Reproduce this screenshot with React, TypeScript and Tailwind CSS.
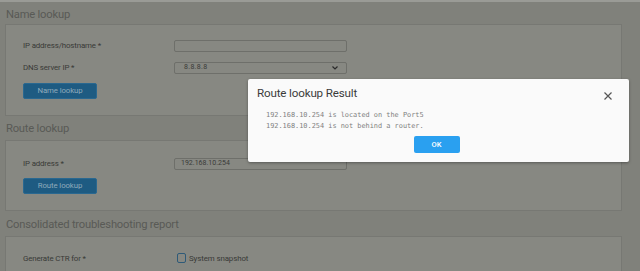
import React from "react";

function Label({ children }: { children: React.ReactNode }) {
  return <div className="w-[151px] text-[7.9px] tracking-[-0.15px] text-[#393a37]">{children}</div>;
}

export default function App() {
  return (
    <div
      className="relative w-[640px] h-[271px] overflow-hidden bg-[#80817b] border-t-2 border-[#9a9b96]"
      style={{ fontFamily: "Roboto, 'Liberation Sans', sans-serif" }}
    >
      <div className="pl-[5px] pr-[18px]">
        <div className="text-[11.2px] tracking-[-0.2px] text-[#595a56] pl-[1px] pt-[5px] h-[22px] leading-[16px]">Name lookup</div>
        <div className="border border-[#777873] bg-[#878882] h-[92px] pl-[17px] pt-[14px]">
          <div className="flex items-center h-[13px]">
            <Label>IP address/hostname *</Label>
            <div className="w-[173px] h-[12px] border border-[#6e6f6a] rounded-[2px] bg-[#878882]" />
          </div>
          <div className="flex items-center h-[13px] mt-[9px]">
            <Label>DNS server IP *</Label>
            <div className="w-[173px] h-[12px] border border-[#6e6f6a] rounded-[2px] bg-[#878882] flex items-center justify-between pl-[9px] pr-[8px]">
              <span className="text-[7px] text-[#3a3b38] tracking-[0.3px]">8.8.8.8</span>
              <svg width="6" height="4" viewBox="0 0 6 4"><path d="M0.5 0.5 L3 3 L5.5 0.5" stroke="#2a2a2a" strokeWidth="1.2" fill="none" /></svg>
            </div>
          </div>
          <button className="mt-[9px] w-[74px] h-[16px] rounded-[2px] bg-[#1e5b82] border border-[#2a6890] text-[7.8px] tracking-[-0.1px] text-[#8eaabb] flex items-center justify-center">
            Name lookup
          </button>
        </div>
        <div className="text-[11.2px] tracking-[-0.2px] text-[#595a56] pl-[1px] pt-[5px] h-[24px] leading-[16px]">Route lookup</div>
        <div className="border border-[#777873] bg-[#878882] h-[71px] pl-[17px] pt-[16px]">
          <div className="flex items-center h-[13px]">
            <Label>IP address *</Label>
            <div className="w-[173px] h-[12px] border border-[#6e6f6a] rounded-[2px] bg-[#878882] flex items-center px-[6px]">
              <span className="text-[7px] text-[#3a3b38]">192.168.10.254</span>
            </div>
          </div>
          <button className="mt-[8px] w-[74px] h-[16px] rounded-[2px] bg-[#1e5b82] border border-[#2a6890] text-[7.8px] tracking-[-0.1px] text-[#8eaabb] flex items-center justify-center">
            Route lookup
          </button>
        </div>
        <div className="text-[11.2px] tracking-[-0.2px] text-[#595a56] pl-[1px] pt-[6px] h-[25px] leading-[16px]">Consolidated troubleshooting report</div>
        <div className="border border-[#777873] bg-[#878882] h-[40px] pl-[17px] pt-[15px]">
          <div className="flex items-center h-[13px]">
            <Label>Generate CTR for *</Label>
            <div className="flex items-center ml-[3px]">
              <div className="w-[9px] h-[10px] border border-[#2e5a78] rounded-[2px]" />
              <span className="ml-[3px] text-[7.9px] tracking-[-0.1px] text-[#393a37]">System snapshot</span>
            </div>
          </div>
        </div>
      </div>

      <div className="absolute left-[248px] top-[77px] w-[381px] h-[83px] bg-[#fafafa] rounded-[2px] shadow-[0_1px_3px_rgba(0,0,0,0.35)]">
        <div className="flex items-center justify-between pl-[9px] pr-[17px] pt-[7px] h-[22px]">
          <span className="text-[11.6px] tracking-[-0.15px] text-[#3a3a3a]">Route lookup Result</span>
          <svg width="8" height="8" viewBox="0 0 8 8" className="mt-[4px]">
            <path d="M0.5 0.5 L7.5 7.5 M7.5 0.5 L0.5 7.5" stroke="#555" strokeWidth="1.2" />
          </svg>
        </div>
        <div
          className="pl-[18px] mt-[9px] text-[6.9px] leading-[11px] text-[#808080]"
          style={{ fontFamily: "'DejaVu Sans Mono', 'Liberation Mono', monospace" }}
        >
          <div>192.168.10.254 is located on the Port5</div>
          <div>192.168.10.254 is not behind a router.</div>
        </div>
        <div className="flex justify-center mt-[4px] pr-[4px]">
          <button className="w-[46px] h-[17px] rounded-[2px] bg-[#2aa0f0] text-white text-[7.5px] font-medium">OK</button>
        </div>
      </div>
    </div>
  );
}
